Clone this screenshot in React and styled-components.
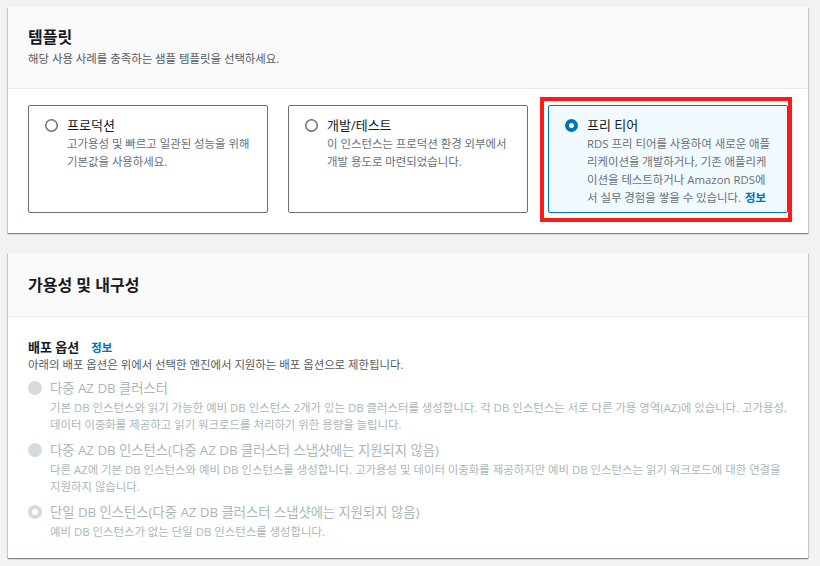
import React from "react";
import styled, { createGlobalStyle } from "styled-components";

const GlobalStyle = createGlobalStyle`
  body {
    margin: 0;
    background-color: #f2f3f3;
    font-family: "Open Sans", "Noto Sans CJK KR", sans-serif;
    color: #16191f;
  }
`;

const Page = styled.div`
  display: flex;
  flex-direction: column;
  gap: 20px;
  width: 800px;
  padding: 7px 12px 8px 8px;
`;

const Container = styled.section`
  background-color: white;
  box-shadow: 0 1px 1px 0 rgba(0, 28, 36, 0.3),
    1px 1px 1px 0 rgba(0, 28, 36, 0.15), -1px 1px 1px 0 rgba(0, 28, 36, 0.15);
`;

const Header = styled.header`
  background-color: #fafafa;
  border-bottom: 1px solid #eaeded;
  padding: ${(props) => props.$padding || "19px 20px 21px"};
`;

const Title = styled.h2`
  margin: 0;
  font-size: 16px;
  line-height: 22px;
  font-weight: 700;
  color: #16191f;
`;

const Subtitle = styled.p`
  margin: 3px 0 0;
  font-size: 11.4px;
  line-height: 16px;
  color: #545b64;
`;

const Body = styled.div`
  padding: ${(props) => props.$padding || "16px 20px 20px"};
`;

const TileGrid = styled.div`
  display: grid;
  grid-template-columns: repeat(3, 1fr);
  gap: 20px;
`;

const Tile = styled.div`
  position: relative;
  display: flex;
  align-items: flex-start;
  gap: 9px;
  min-height: 108px;
  box-sizing: border-box;
  padding: 9px 10px 5px 16px;
  border: 1px solid ${(props) => (props.$selected ? "#0073bb" : "#687078")};
  border-radius: 2px;
  background-color: ${(props) => (props.$selected ? "#f1faff" : "white")};

  &::after {
    content: "";
    display: ${(props) => (props.$annotated ? "block" : "none")};
    position: absolute;
    top: -9px;
    left: -9px;
    right: -5px;
    bottom: -10px;
    border: 4px solid #ff1a1a;
    pointer-events: none;
  }
`;

const RadioBox = styled.span`
  flex: 0 0 auto;
  display: block;
  margin-top: ${(props) => props.$offset || "4px"};
  line-height: 0;
`;

const TileText = styled.div`
  display: flex;
  flex-direction: column;
`;

const TileLabel = styled.span`
  font-size: 13px;
  line-height: 20px;
  color: #16191f;
`;

const TileDescription = styled.span`
  font-size: 11.4px;
  line-height: 18px;
  color: #687078;
  white-space: pre;
`;

const InfoLink = styled.a`
  font-size: 11.4px;
  font-weight: 700;
  color: #0073bb;
  text-decoration: none;
  margin-left: ${(props) => props.$gap || "0"};
`;

const FieldLabel = styled.div`
  display: flex;
  align-items: baseline;
  font-size: 13px;
  line-height: 18px;
  font-weight: 700;
  color: #16191f;
`;

const FieldDescription = styled.p`
  margin: 0;
  font-size: 11.4px;
  line-height: 16px;
  color: #545b64;
`;

const OptionList = styled.div`
  display: flex;
  flex-direction: column;
  gap: 6px;
  margin-top: 4px;
`;

const Option = styled.div`
  display: flex;
  align-items: flex-start;
  gap: 8px;
`;

const OptionText = styled.div`
  display: flex;
  flex-direction: column;
`;

const OptionLabel = styled.span`
  font-size: 13.3px;
  line-height: 22px;
  color: #aab7b8;
`;

const OptionDescription = styled.span`
  font-size: 11.4px;
  line-height: 17px;
  color: #aab7b8;
  white-space: pre;
`;

const Radio = ({ variant, size = 13 }) => {
  const c = size / 2;
  if (variant === "checked") {
    return (
      <svg width={size} height={size} viewBox={`0 0 ${size} ${size}`}>
        <circle cx={c} cy={c} r={c - 2} fill="white" stroke="#0073bb" strokeWidth="4" />
      </svg>
    );
  }
  if (variant === "disabled") {
    return (
      <svg width={size} height={size} viewBox={`0 0 ${size} ${size}`}>
        <circle cx={c} cy={c} r={c} fill="#d5dbdb" />
      </svg>
    );
  }
  if (variant === "disabledChecked") {
    return (
      <svg width={size} height={size} viewBox={`0 0 ${size} ${size}`}>
        <circle cx={c} cy={c} r={c - 2} fill="white" stroke="#d5dbdb" strokeWidth="4" />
      </svg>
    );
  }
  return (
    <svg width={size} height={size} viewBox={`0 0 ${size} ${size}`}>
      <circle cx={c} cy={c} r={c - 0.75} fill="white" stroke="#687078" strokeWidth="1.5" />
    </svg>
  );
};

const templates = [
  {
    label: "프로덕션",
    description: "고가용성 및 빠르고 일관된 성능을 위해\n기본값을 사용하세요.",
  },
  {
    label: "개발/테스트",
    description: "이 인스턴스는 프로덕션 환경 외부에서\n개발 용도로 마련되었습니다.",
  },
  {
    label: "프리 티어",
    description:
      "RDS 프리 티어를 사용하여 새로운 애플\n리케이션을 개발하거나, 기존 애플리케\n이션을 테스트하거나 Amazon RDS에\n서 실무 경험을 쌓을 수 있습니다.",
    selected: true,
    info: true,
  },
];

const deployOptions = [
  {
    label: "다중 AZ DB 클러스터",
    description:
      "기본 DB 인스턴스와 읽기 가능한 예비 DB 인스턴스 2개가 있는 DB 클러스터를 생성합니다. 각 DB 인스턴스는 서로 다른 가용 영역(AZ)에 있습니다. 고가용성,\n데이터 이중화를 제공하고 읽기 워크로드를 처리하기 위한 용량을 늘립니다.",
    radio: "disabled",
  },
  {
    label: "다중 AZ DB 인스턴스(다중 AZ DB 클러스터 스냅샷에는 지원되지 않음)",
    description:
      "다른 AZ에 기본 DB 인스턴스와 예비 DB 인스턴스를 생성합니다. 고가용성 및 데이터 이중화를 제공하지만 예비 DB 인스턴스는 읽기 워크로드에 대한 연결을\n지원하지 않습니다.",
    radio: "disabled",
  },
  {
    label: "단일 DB 인스턴스(다중 AZ DB 클러스터 스냅샷에는 지원되지 않음)",
    description: "예비 DB 인스턴스가 없는 단일 DB 인스턴스를 생성합니다.",
    radio: "disabledChecked",
  },
];

const App = () => {
  return (
    <>
      <GlobalStyle />
      <Page>
        <Container>
          <Header>
            <Title>템플릿</Title>
            <Subtitle>해당 사용 사례를 충족하는 샘플 템플릿을 선택하세요.</Subtitle>
          </Header>
          <Body>
            <TileGrid>
              {templates.map((t) => (
                <Tile key={t.label} $selected={t.selected} $annotated={t.selected}>
                  <RadioBox>
                    <Radio variant={t.selected ? "checked" : "empty"} />
                  </RadioBox>
                  <TileText>
                    <TileLabel>{t.label}</TileLabel>
                    <TileDescription>
                      {t.description}
                      {t.info && (
                        <InfoLink href="#" $gap="4px">
                          정보
                        </InfoLink>
                      )}
                    </TileDescription>
                  </TileText>
                </Tile>
              ))}
            </TileGrid>
          </Body>
        </Container>

        <Container>
          <Header $padding="21px 20px 20px">
            <Title>가용성 및 내구성</Title>
          </Header>
          <Body $padding="21px 20px 18px">
            <FieldLabel>
              배포 옵션
              <InfoLink href="#" $gap="12px">
                정보
              </InfoLink>
            </FieldLabel>
            <FieldDescription>
              아래의 배포 옵션은 위에서 선택한 엔진에서 지원하는 배포 옵션으로 제한됩니다.
            </FieldDescription>
            <OptionList>
              {deployOptions.map((o) => (
                <Option key={o.label}>
                  <RadioBox $offset="4px">
                    <Radio variant={o.radio} size={14} />
                  </RadioBox>
                  <OptionText>
                    <OptionLabel>{o.label}</OptionLabel>
                    <OptionDescription>{o.description}</OptionDescription>
                  </OptionText>
                </Option>
              ))}
            </OptionList>
          </Body>
        </Container>
      </Page>
    </>
  );
};

export default App;
